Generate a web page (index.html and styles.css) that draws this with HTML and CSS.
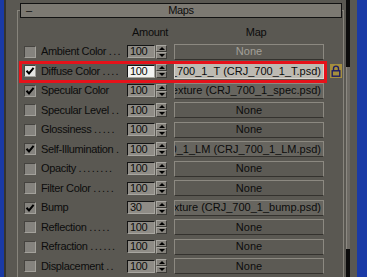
FILE: index.html
```html
<!DOCTYPE html>
<html>
<head>
	<link rel="stylesheet" href="styles.css">
</head>
<body>
	<div class="edge edge-left"></div>

	<div class="panel">
		<div class="rollout">
			<div class="rollout-title">
				<span class="toggle">&ndash;</span>
				<span class="title">Maps</span>
				<span></span>
			</div>

			<div class="colhead">
				<span class="amount-head">Amount</span>
				<span class="map-head">Map</span>
			</div>

			<div class="maprow">
				<span class="check"></span>
				<span class="label">Ambient Color <span class="dots">...</span></span>
				<span class="amount">100</span>
				<span class="spin"><i class="up"></i><i class="down"></i></span>
				<span class="mapbtn disabled"><span>None</span></span>
			</div>

			<div class="maprow active">
				<span class="check on"><svg viewBox="0 0 10 10" width="10" height="10"><path d="M1.5 4.8 L4 7.5 L8.6 1.8" fill="none" stroke="#000" stroke-width="2"/></svg></span>
				<span class="label">Diffuse Color <span class="dots">....</span></span>
				<span class="amount">100</span>
				<span class="spin"><i class="up"></i><i class="down"></i></span>
				<span class="mapbtn long"><span>CRJ_700_1_T (CRJ_700_1_T.psd)</span></span>
				<span class="lock">
					<svg viewBox="0 0 12 14" width="12" height="14">
						<path d="M3.5 7 V4.6 A2.5 2.5 0 0 1 8.5 4.6 V7" fill="none" stroke="#1c1c66" stroke-width="1.4"/>
						<rect x="2.2" y="6.8" width="7.6" height="5.4" fill="#a48e3e" stroke="#1c1c66" stroke-width="1.4"/>
					</svg>
				</span>
			</div>

			<div class="maprow">
				<span class="check"><svg viewBox="0 0 10 10" width="10" height="10"><path d="M1.5 4.8 L4 7.5 L8.6 1.8" fill="none" stroke="#000" stroke-width="2"/></svg></span>
				<span class="label">Specular Color</span>
				<span class="amount">100</span>
				<span class="spin"><i class="up"></i><i class="down"></i></span>
				<span class="mapbtn long tex"><span>Specular texture (CRJ_700_1_spec.psd)</span></span>
			</div>

			<div class="maprow">
				<span class="check"></span>
				<span class="label">Specular Level <span class="dots">..</span></span>
				<span class="amount">100</span>
				<span class="spin"><i class="up"></i><i class="down"></i></span>
				<span class="mapbtn"><span>None</span></span>
			</div>

			<div class="maprow">
				<span class="check"></span>
				<span class="label">Glossiness <span class="dots">.....</span></span>
				<span class="amount">100</span>
				<span class="spin"><i class="up"></i><i class="down"></i></span>
				<span class="mapbtn"><span>None</span></span>
			</div>

			<div class="maprow">
				<span class="check"><svg viewBox="0 0 10 10" width="10" height="10"><path d="M1.5 4.8 L4 7.5 L8.6 1.8" fill="none" stroke="#000" stroke-width="2"/></svg></span>
				<span class="label">Self-Illumination <span class="dots">.</span></span>
				<span class="amount">100</span>
				<span class="spin"><i class="up"></i><i class="down"></i></span>
				<span class="mapbtn long tex"><span>CRJ_700_1_LM (CRJ_700_1_LM.psd)</span></span>
			</div>

			<div class="maprow">
				<span class="check"></span>
				<span class="label">Opacity <span class="dots">........</span></span>
				<span class="amount">100</span>
				<span class="spin"><i class="up"></i><i class="down"></i></span>
				<span class="mapbtn"><span>None</span></span>
			</div>

			<div class="maprow">
				<span class="check"></span>
				<span class="label">Filter Color <span class="dots">.....</span></span>
				<span class="amount">100</span>
				<span class="spin"><i class="up"></i><i class="down"></i></span>
				<span class="mapbtn"><span>None</span></span>
			</div>

			<div class="maprow">
				<span class="check"><svg viewBox="0 0 10 10" width="10" height="10"><path d="M1.5 4.8 L4 7.5 L8.6 1.8" fill="none" stroke="#000" stroke-width="2"/></svg></span>
				<span class="label">Bump</span>
				<span class="amount">30</span>
				<span class="spin"><i class="up"></i><i class="down"></i></span>
				<span class="mapbtn long tex"><span>Bump texture (CRJ_700_1_bump.psd)</span></span>
			</div>

			<div class="maprow">
				<span class="check"></span>
				<span class="label">Reflection <span class="dots">.....</span></span>
				<span class="amount">100</span>
				<span class="spin"><i class="up"></i><i class="down"></i></span>
				<span class="mapbtn"><span>None</span></span>
			</div>

			<div class="maprow">
				<span class="check"></span>
				<span class="label">Refraction <span class="dots">......</span></span>
				<span class="amount">100</span>
				<span class="spin"><i class="up"></i><i class="down"></i></span>
				<span class="mapbtn"><span>None</span></span>
			</div>

			<div class="maprow">
				<span class="check"></span>
				<span class="label">Displacement <span class="dots">..</span></span>
				<span class="amount">100</span>
				<span class="spin"><i class="up"></i><i class="down"></i></span>
				<span class="mapbtn"><span>None</span></span>
			</div>
		</div>
	</div>

	<div class="scrollbar"><div class="thumb"></div></div>
	<div class="gutter"></div>
	<div class="edge edge-right"></div>
</body>
</html>
```

FILE: styles.css
```css
html, body {
	margin: 0px;
	height: 100%;
}

body {
	display: flex;
	width: 367px;
	height: 277px;
	overflow: hidden;
	background: #5a5852;
	font-family: "Liberation Sans", Arial, sans-serif;
	font-size: 11px;
	letter-spacing: -0.35px;
	color: #0c0c0c;
}

.edge { background: #1a3aa6; }
.edge-left { width: 4px; border-right: 2px solid #35342f; }
.edge-right { width: 10px; }

.panel {
	display: flex;
	flex-direction: column;
	width: 340px;
	padding: 10px 2px 0px 11px;
	box-sizing: border-box;
}

.rollout {
	flex: 1;
	border: 1px solid #87847c;
	border-bottom: none;
}

.rollout-title {
	display: grid;
	grid-template-columns: 1fr auto 1fr;
	align-items: center;
	height: 15px;
	margin: -8px 1px 0px 2px;
	box-sizing: border-box;
	border: 1px solid #121212;
	background: #7c7972;
	line-height: 13px;
}

.toggle { padding-left: 5px; }

.colhead {
	display: flex;
	align-items: flex-end;
	height: 24px;
	padding-bottom: 3px;
	box-sizing: border-box;
	line-height: 13px;
}

.amount-head { width: 40px; margin-left: 112px; text-align: center; }
.map-head { width: 40px; margin-left: 66px; text-align: center; }

.maprow {
	position: relative;
	display: flex;
	align-items: center;
	height: 19.5px;
	padding-left: 6px;
}

/* red annotation frame round the diffuse row */
.maprow.active::after {
	content: "";
	position: absolute;
	left: 1px;
	top: -1px;
	width: 308px;
	height: 22px;
	border: 3px solid #e5121a;
	box-sizing: border-box;
}

.check {
	display: flex;
	align-items: center;
	justify-content: center;
	width: 12px;
	height: 12px;
	box-sizing: border-box;
	background: #85837e;
	border: 1px solid #a3a19b;
	border-top-color: #45433f;
	border-left-color: #45433f;
}

.check.on { background: #e6e6e3; }

.label {
	width: 86px;
	margin-left: 5px;
	white-space: nowrap;
	overflow: hidden;
	line-height: 13px;
}

.dots { letter-spacing: 1.3px; }

.amount {
	width: 28px;
	height: 13px;
	padding-left: 2px;
	box-sizing: border-box;
	background: #8f8c86;
	border: 1px solid #a8a6a0;
	border-top-color: #141414;
	border-left-color: #141414;
	line-height: 11px;
}

.active .amount { background: #f3f3f1; }

.spin {
	display: flex;
	flex-direction: column;
	width: 11px;
	height: 14px;
	margin-left: 1px;
}

.spin i {
	display: flex;
	align-items: center;
	justify-content: center;
	flex: 1;
	background: #85827c;
	border: 1px solid #3a3935;
	border-top-color: #a9a7a1;
	border-left-color: #a9a7a1;
}

.spin i::after {
	content: "";
	border-left: 3px solid transparent;
	border-right: 3px solid transparent;
}

.spin .up::after { border-bottom: 3px solid #000; }
.spin .down::after { border-top: 3px solid #000; }

.mapbtn {
	display: flex;
	justify-content: center;
	align-items: center;
	width: 150px;
	height: 16px;
	margin-left: 7px;
	box-sizing: border-box;
	overflow: hidden;
	white-space: nowrap;
	background: #5c5a54;
	border: 1px solid #8c8981;
	border-bottom-color: #34322e;
	line-height: 13px;
	letter-spacing: 0px;
}

.mapbtn.long { justify-content: flex-end; padding-right: 2px; }
.mapbtn.tex { background: #67655f; }
.active .mapbtn { background: #bdbab2; border-color: #d8d6d0; }
.mapbtn.disabled { color: #a3a098; }

.lock {
	display: block;
	width: 12px;
	height: 14px;
	margin-left: 6px;
	background: #a48e3e;
}

.lock svg { display: block; }

.scrollbar {
	width: 4px;
	background: #0c0c0c;
}

.thumb {
	height: 182px;
	margin-top: 67px;
	background: #6e6b65;
	border-left: 1px solid #8c8982;
	box-sizing: border-box;
}

.gutter { width: 7px; }
```
